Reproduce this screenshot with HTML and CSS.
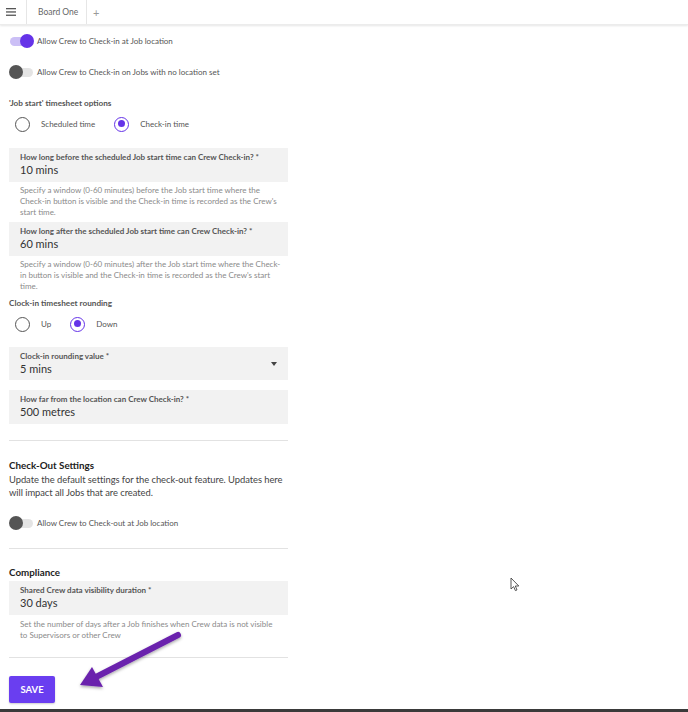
FILE: index.html
```html
<!DOCTYPE html>
<html>
<head>
<meta charset="utf-8">
<link rel="stylesheet" href="styles.css">
</head>
<body>
<header class="topbar">
  <div class="menu-btn">
    <svg width="10" height="8" viewBox="0 0 10 8"><rect x="0" y="0" width="10" height="1.3" fill="#555"/><rect x="0" y="3.3" width="10" height="1.3" fill="#555"/><rect x="0" y="6.6" width="10" height="1.3" fill="#555"/></svg>
  </div>
  <div class="tab">Board One</div>
  <div class="add-tab">+</div>
</header>

<main class="content">
  <div class="toggle-row first">
    <span class="switch on"><span class="track"></span><span class="thumb"></span></span>
    <span class="toggle-label">Allow Crew to Check-in at Job location</span>
  </div>
  <div class="toggle-row second">
    <span class="switch"><span class="track"></span><span class="thumb"></span></span>
    <span class="toggle-label">Allow Crew to Check-in on Jobs with no location set</span>
  </div>

  <div class="group-title t1">'Job start' timesheet options</div>
  <div class="radio-row">
    <span class="radio"></span><span class="radio-label">Scheduled time</span>
    <span class="radio checked"></span><span class="radio-label">Check-in time</span>
  </div>

  <div class="field f1">
    <div class="field-label">How long before the scheduled Job start time can Crew Check-in? *</div>
    <div class="field-value">10 mins</div>
  </div>
  <div class="helper">Specify a window (0-60 minutes) before the Job start time where the Check-in button is visible and the Check-in time is recorded as the Crew's start time.</div>

  <div class="field f2">
    <div class="field-label">How long after the scheduled Job start time can Crew Check-in? *</div>
    <div class="field-value">60 mins</div>
  </div>
  <div class="helper">Specify a window (0-60 minutes) after the Job start time where the Check-in button is visible and the Check-in time is recorded as the Crew's start time.</div>

  <div class="group-title t2">Clock-in timesheet rounding</div>
  <div class="radio-row">
    <span class="radio"></span><span class="radio-label">Up</span>
    <span class="radio checked"></span><span class="radio-label">Down</span>
  </div>

  <div class="field f3 select">
    <div class="field-label">Clock-in rounding value *</div>
    <div class="field-value">5 mins</div>
    <span class="caret"></span>
  </div>
  <div class="field f4">
    <div class="field-label">How far from the location can Crew Check-in? *</div>
    <div class="field-value">500 metres</div>
  </div>

  <hr class="divider d1">

  <h2 class="section-title s1">Check-Out Settings</h2>
  <p class="section-desc">Update the default settings for the check-out feature. Updates here will impact all Jobs that are created.</p>
  <div class="toggle-row third">
    <span class="switch"><span class="track"></span><span class="thumb"></span></span>
    <span class="toggle-label">Allow Crew to Check-out at Job location</span>
  </div>

  <hr class="divider d2">

  <h2 class="section-title s2">Compliance</h2>
  <div class="field f5">
    <div class="field-label">Shared Crew data visibility duration *</div>
    <div class="field-value">30 days</div>
  </div>
  <div class="helper">Set the number of days after a Job finishes when Crew data is not visible to Supervisors or other Crew</div>

  <hr class="divider d3">

  <button class="save-btn">SAVE</button>
</main>
<div class="bottom-edge"></div>

<svg class="annot-arrow" width="120" height="70" viewBox="0 0 120 70">
  <defs>
    <filter id="sh" x="-20%" y="-20%" width="140%" height="140%">
      <feDropShadow dx="0" dy="1.5" stdDeviation="1.5" flood-color="#000" flood-opacity="0.35"/>
    </filter>
  </defs>
  <g filter="url(#sh)" fill="#6a22ad">
    <line x1="108" y1="10" x2="26" y2="52" stroke="#6a22ad" stroke-width="6" stroke-linecap="round"/>
    <polygon points="10,60 22,42 33,62"/>
  </g>
</svg>

<svg class="cursor" width="12" height="16" viewBox="0 0 12 16">
  <path d="M1 1 L1 12 L3.6 9.6 L5.4 13.6 L7 12.9 L5.3 9 L8.8 9 Z" fill="#fff" stroke="#444" stroke-width="0.9" stroke-linejoin="round"/>
</svg>
</body>
</html>
```

FILE: styles.css
```css
* { box-sizing: border-box; }
html, body { margin: 0; padding: 0; background: #fff; }
body {
  font-family: "Source Sans Pro", Lato, "Noto Sans", sans-serif;
  color: #444;
  width: 688px;
  height: 712px;
  position: relative;
  overflow: hidden;
}

.topbar {
  height: 25px;
  display: flex;
  align-items: stretch;
  box-shadow: 0 1px 2px rgba(0,0,0,0.10);
  border-bottom: 1px solid #ececec;
}
.menu-btn {
  width: 27px;
  display: flex;
  align-items: center;
  justify-content: center;
  padding-right: 4px;
  border-right: 1px solid #e6e6e6;
}
.menu-btn svg { display: block; }
.tab {
  width: 60px;
  display: flex;
  align-items: center;
  padding-left: 11px;
  font-size: 8.5px;
  color: #666;
  border-right: 1px solid #e6e6e6;
}
.add-tab {
  display: flex;
  align-items: center;
  padding-left: 6px;
  font-size: 11px;
  color: #999;
}

.content {
  padding-left: 9px;
  width: 288px;
  display: flex;
  flex-direction: column;
  align-items: stretch;
}

.toggle-row {
  height: 20px;
  display: flex;
  align-items: center;
}
.toggle-row.first { margin-top: 6px; }
.toggle-row.second { margin-top: 11px; }
.toggle-row.third { margin-top: 14px; }
.switch {
  position: relative;
  width: 25px;
  height: 14px;
  flex: none;
}
.switch .track {
  position: absolute;
  left: 1px;
  top: 2.5px;
  width: 23px;
  height: 9px;
  border-radius: 5px;
  background: #e4e4e4;
}
.switch .thumb {
  position: absolute;
  left: 0;
  top: 0;
  width: 14px;
  height: 14px;
  border-radius: 50%;
  background: #555;
}
.switch.on .track { background: #cbbff6; }
.switch.on .thumb { left: 11px; background: #6533e8; }
.toggle-label {
  margin-left: 3px;
  font-size: 8px;
  color: #555;
}

.group-title {
  height: 12px;
  line-height: 12px;
  font-size: 8.2px;
  font-weight: 700;
  color: #555;
}
.group-title.t1 { margin-top: 15px; }
.group-title.t2 { margin-top: 5px; }

.radio-row {
  height: 18px;
  display: flex;
  align-items: center;
  padding-left: 6px;
  margin-top: 6px;
}
.radio {
  width: 15px;
  height: 15px;
  border-radius: 50%;
  border: 1.5px solid #555;
  flex: none;
  position: relative;
}
.radio.checked { border-color: #6533e8; }
.radio.checked::after {
  content: "";
  position: absolute;
  left: 2.5px;
  top: 2.5px;
  width: 7px;
  height: 7px;
  border-radius: 50%;
  background: #6533e8;
}
.radio-label {
  font-size: 8px;
  color: #555;
  margin-left: 11px;
  margin-right: 19px;
}

.field {
  position: relative;
  height: 34px;
  background: #f2f2f2;
  padding: 4px 11px 0;
}
.field.f1 { margin-top: 15px; }
.field.f2 { margin-top: 4px; }
.field.f3 { margin-top: 14px; height: 33px; }
.field.f4 { margin-top: 10px; }
.field.f5 { margin-top: 2px; }
.field-label {
  font-size: 8px;
  line-height: 11px;
  font-weight: 700;
  color: #555;
  white-space: nowrap;
}
.field-value {
  font-size: 11px;
  line-height: 14px;
  color: #333;
}
.caret {
  position: absolute;
  right: 11px;
  top: 15px;
  width: 0;
  height: 0;
  border-left: 3.5px solid transparent;
  border-right: 3.5px solid transparent;
  border-top: 4px solid #444;
}

.helper {
  font-size: 8px;
  line-height: 11px;
  color: #8a8a8a;
  padding: 3px 6px 0 11px;
  height: 36px;
  hyphens: manual;
}
.f5 + .helper { height: 26px; padding-top: 4px; padding-right: 11px; }

.divider {
  border: 0;
  height: 1px;
  background: #e2e2e2;
  margin: 0;
}
.divider.d1 { margin-top: 16px; }
.divider.d2 { margin-top: 15px; }
.divider.d3 { margin-top: 16px; }

.section-title {
  font-size: 9.8px;
  font-weight: 700;
  color: #222;
  line-height: 14px;
  margin: 0;
}
.section-title.s1 { margin-top: 17px; }
.section-title.s2 { margin-top: 16px; }
.section-desc {
  margin: 1px 0 0;
  font-size: 9.4px;
  line-height: 13px;
  color: #444;
  letter-spacing: -0.05px;
}

.save-btn {
  margin-top: 18px;
  width: 46px;
  height: 27px;
  border: 0;
  border-radius: 2px;
  background: #6a3ef0;
  color: #fff;
  font-family: inherit;
  font-weight: 700;
  font-size: 9.5px;
  padding: 0;
  align-self: flex-start;
  box-shadow: 0 1px 2px rgba(0,0,0,0.2);
}

.bottom-edge {
  position: absolute;
  left: 0;
  right: 0;
  bottom: 0;
  height: 3px;
  background: #3a3a3a;
}

.annot-arrow {
  position: absolute;
  left: 70px;
  top: 625px;
}
.cursor {
  position: absolute;
  left: 510px;
  top: 577px;
}
```
